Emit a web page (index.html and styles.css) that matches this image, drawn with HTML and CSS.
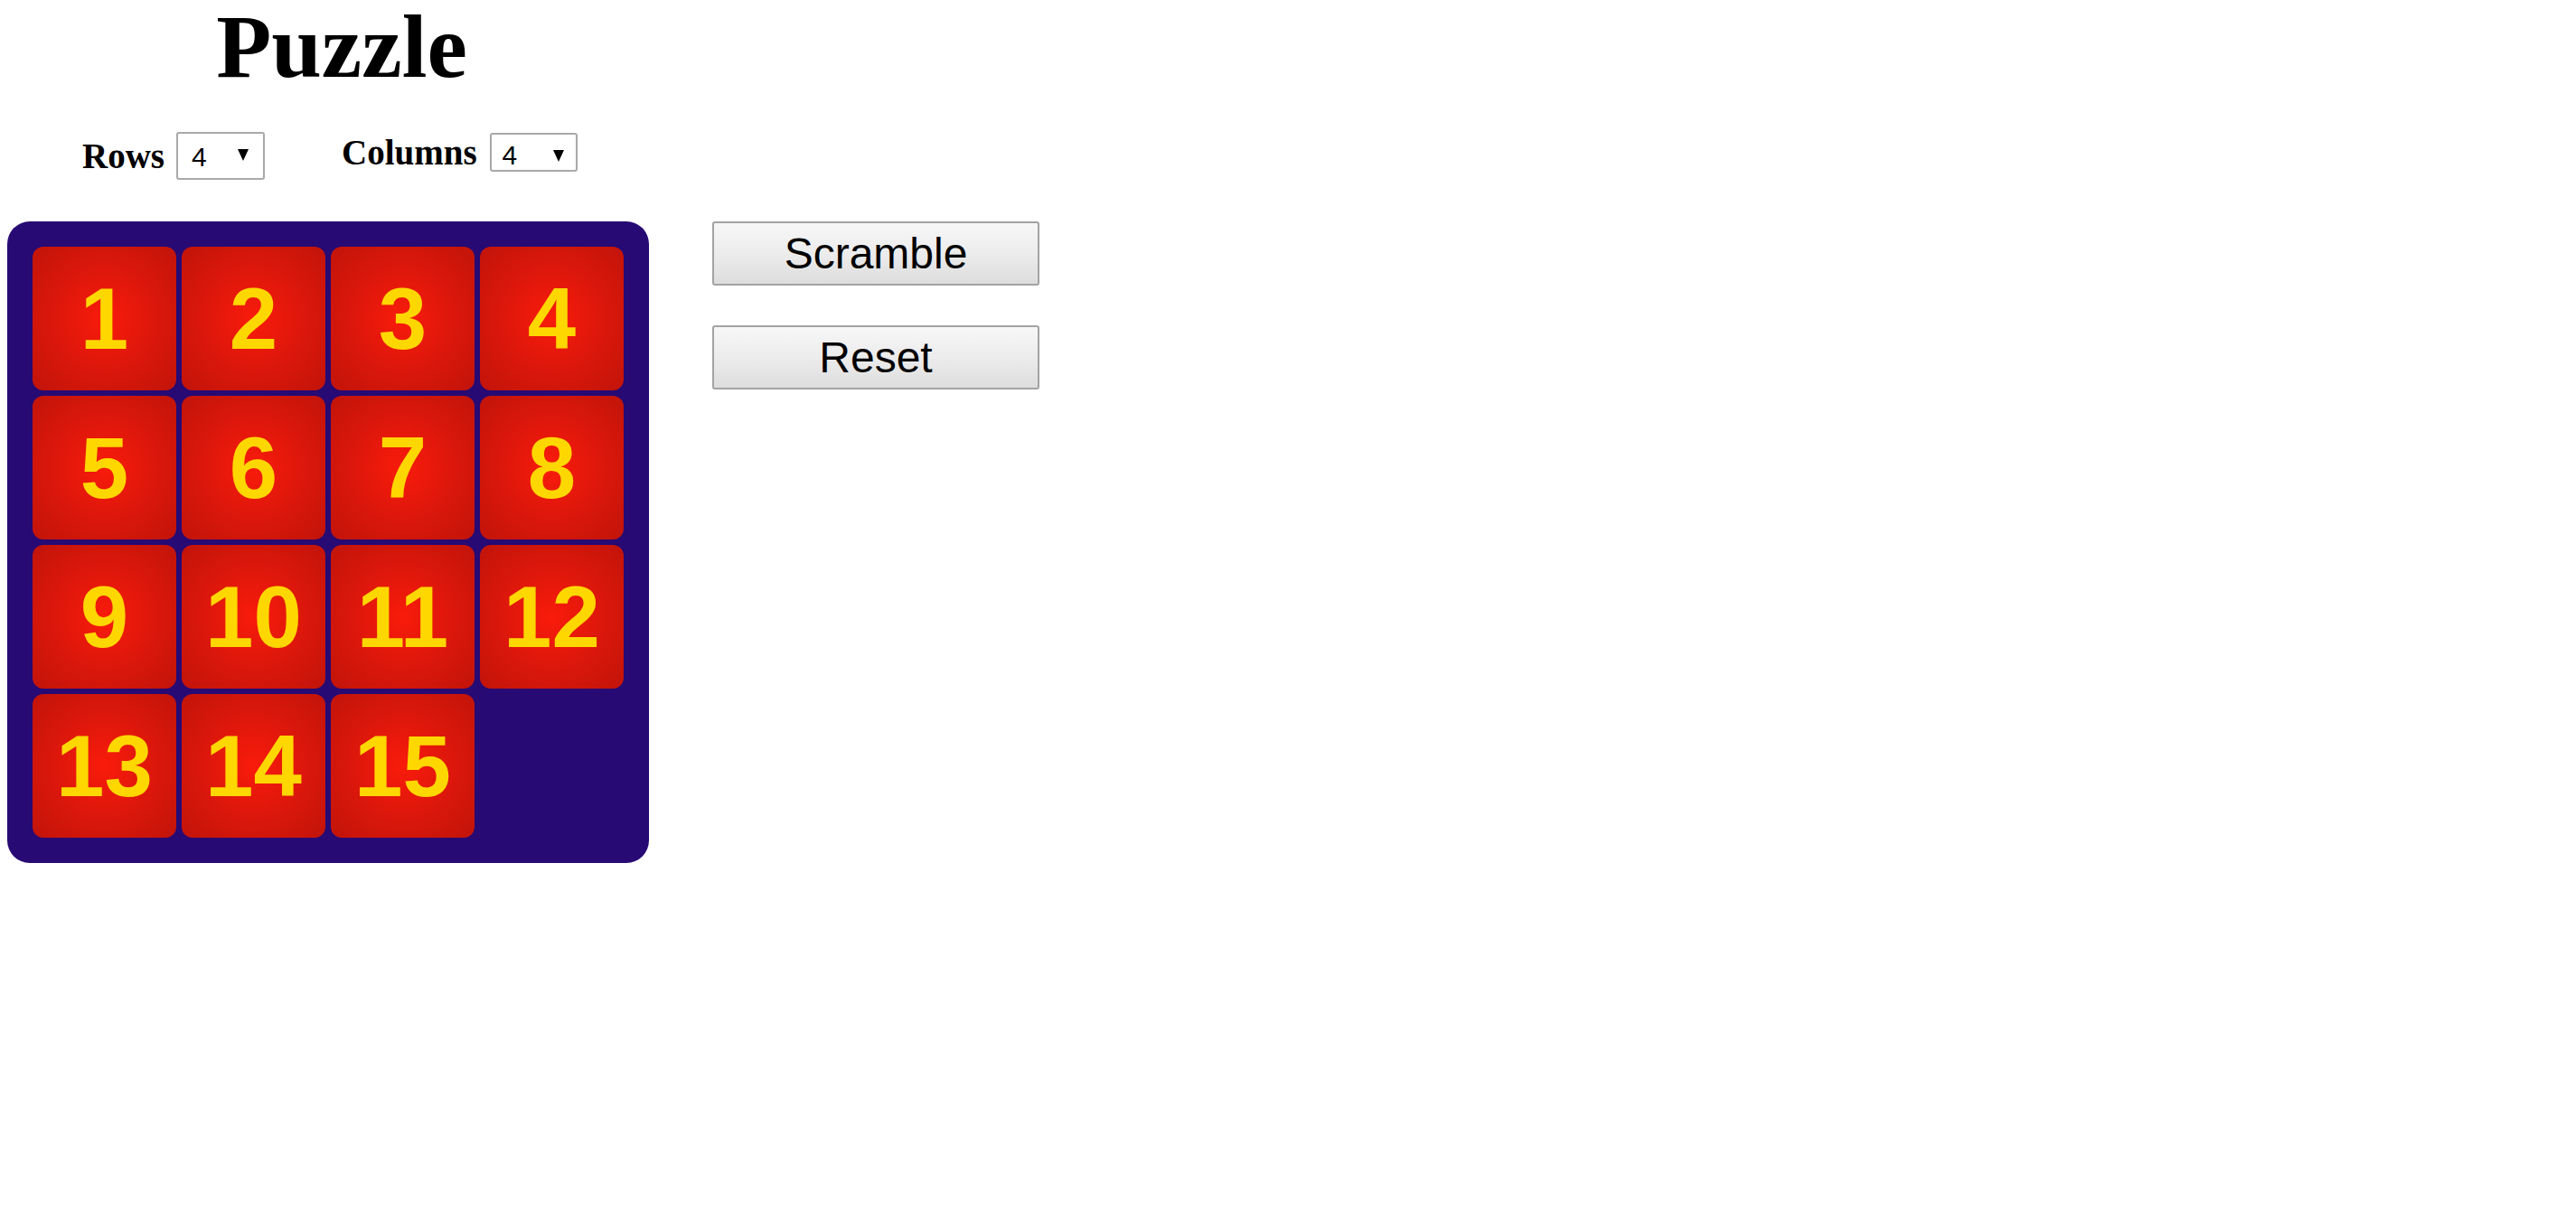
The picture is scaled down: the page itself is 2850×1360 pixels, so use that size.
FILE: index.html
```html
<!DOCTYPE html>
<html lang="en">
<head>
<meta charset="utf-8">
<title>Puzzle</title>
<link rel="stylesheet" href="styles.css">
</head>
<body>
<div class="page">
  <h1 class="title">Puzzle</h1>
  <div class="controls">
    <div class="ctl ctl-rows">
      <span class="ctl-label">Rows</span>
      <div class="select select-rows" role="combobox" aria-label="Rows"><span class="select-value">4</span><span class="select-arrow"></span></div>
    </div>
    <div class="ctl ctl-cols">
      <span class="ctl-label">Columns</span>
      <div class="select select-cols" role="combobox" aria-label="Columns"><span class="select-value">4</span><span class="select-arrow"></span></div>
    </div>
  </div>
  <div class="main">
    <div class="board">
      <div class="tile">1</div>
      <div class="tile">2</div>
      <div class="tile">3</div>
      <div class="tile">4</div>
      <div class="tile">5</div>
      <div class="tile">6</div>
      <div class="tile">7</div>
      <div class="tile">8</div>
      <div class="tile">9</div>
      <div class="tile">10</div>
      <div class="tile">11</div>
      <div class="tile">12</div>
      <div class="tile">13</div>
      <div class="tile">14</div>
      <div class="tile">15</div>
      <div class="tile tile-empty"></div>
    </div>
    <div class="actions">
      <button class="btn" type="button">Scramble</button>
      <button class="btn" type="button">Reset</button>
    </div>
  </div>
</div>
</body>
</html>
```

FILE: styles.css
```css
html, body {
  margin: 0;
  padding: 0;
  background: #ffffff;
}

.page {
  padding: 0 8px;
  font-family: "Liberation Serif", "Times New Roman", serif;
  color: #000;
}

.title {
  width: 740px;
  margin: 0;
  padding-top: 2px;
  height: 100px;
  font-family: "Liberation Serif", "Times New Roman", serif;
  font-weight: 700;
  font-size: 100px;
  line-height: 100px;
  text-align: center;
}

.controls {
  display: flex;
  align-items: flex-start;
  gap: 85px;
  margin-top: 44px;
  padding-left: 83px;
}

.ctl {
  display: flex;
  align-items: center;
}

.ctl-rows {
  gap: 13px;
}

.ctl-cols {
  gap: 14px;
}

.ctl-label {
  font-family: "Liberation Serif", "Times New Roman", serif;
  font-weight: 700;
  font-size: 39px;
}

.select {
  box-sizing: border-box;
  display: flex;
  align-items: flex-start;
  justify-content: space-between;
  border: 2px solid #a9a9a9;
  border-radius: 3px;
  background: #ffffff;
  font-family: "Liberation Sans", Arial, sans-serif;
  font-size: 30px;
  line-height: normal;
  color: #000;
}

.select-rows {
  width: 98px;
  height: 53px;
  padding: 9px 16px 0 15px;
}

.select-cols {
  width: 97px;
  height: 43px;
  padding: 6px 13px 0 12px;
}

.select-arrow {
  width: 0;
  height: 0;
  border-left: 6.5px solid transparent;
  border-right: 6.5px solid transparent;
  border-top: 13px solid #000;
}

.select-rows .select-arrow {
  margin-top: 8px;
}

.select-cols .select-arrow {
  margin-top: 11px;
}

.main {
  display: flex;
  align-items: flex-start;
  gap: 70px;
  margin-top: 46px;
}

.board {
  box-sizing: border-box;
  width: 710px;
  height: 710px;
  padding: 28px;
  display: grid;
  grid-template-columns: repeat(4, 159px);
  grid-template-rows: repeat(4, 159px);
  gap: 6px;
  background: #270a73;
  border-radius: 25px;
}

.tile {
  display: flex;
  align-items: center;
  justify-content: center;
  border-radius: 12px;
  background: radial-gradient(ellipse at center, #f91b0b 0%, #dc170b 50%, #c1140a 100%);
  font-family: "Liberation Sans", Arial, sans-serif;
  font-weight: 700;
  font-size: 96px;
  color: #ffd700;
}

.tile-empty {
  background: transparent;
}

.actions {
  display: flex;
  flex-direction: column;
  gap: 44px;
}

.btn {
  box-sizing: border-box;
  width: 362px;
  height: 71px;
  margin: 0;
  padding: 0;
  border: 2px solid #a3a3a3;
  border-radius: 3px;
  background: linear-gradient(to bottom, #f7f7f7 0%, #ececec 50%, #dddddd 100%);
  font-family: "Liberation Sans", Arial, sans-serif;
  font-size: 48px;
  color: #000;
}
```
